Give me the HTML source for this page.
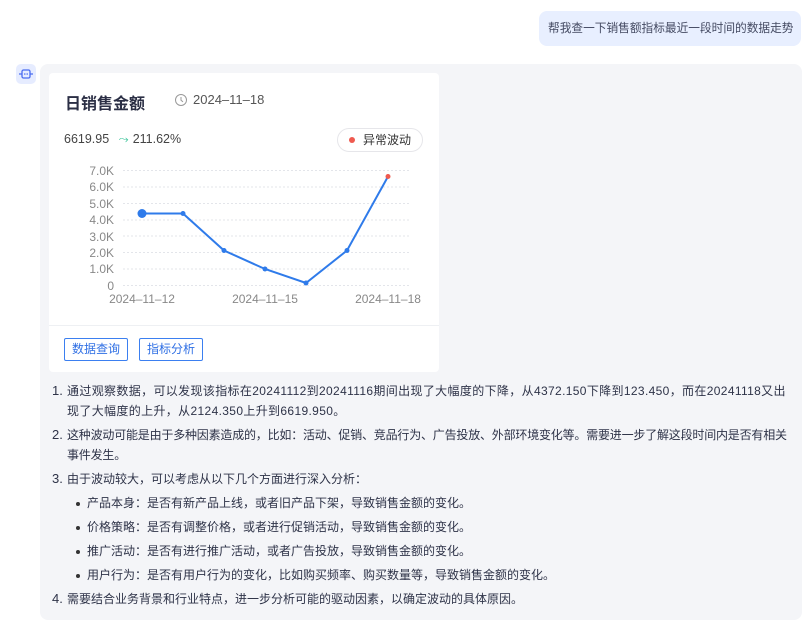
<!DOCTYPE html>
<html><head><meta charset="utf-8"><style>
*{margin:0;padding:0;box-sizing:border-box}
body{width:812px;height:626px;background:#fff;font-family:"Liberation Sans","Noto Sans CJK SC",sans-serif;color:#3a3f55;position:relative;overflow:hidden}
.user{position:absolute;left:539px;top:11px;width:262px;height:35px;background:#e8efff;border-radius:8px;font-size:11.7px;line-height:35px;padding-left:9px;color:#444a62;white-space:nowrap;overflow:hidden}
.av{position:absolute;left:16px;top:64px;width:20px;height:20px;background:#e6ecff;border-radius:5px}
.bot{position:absolute;left:40px;top:64px;width:762px;height:556px;background:#f4f5f8;border-radius:8px}
.card{position:absolute;left:49px;top:73px;width:390px;height:299px;background:#fff;border-radius:4px}
.title{position:absolute;left:16px;top:17px;font-size:16px;font-weight:bold;color:#2b2f45}
.date{position:absolute;left:144px;top:19px;font-size:13px;color:#555}
.val{position:absolute;left:15px;top:59px;font-size:12.5px;color:#444}
.tag{position:absolute;left:288px;top:55px;width:86px;height:24px;border:1px solid #e6e6ea;border-radius:12px;font-size:12px;line-height:22px;padding-left:25px;color:#333}
.tag:before{content:"";position:absolute;left:11px;top:8px;width:6px;height:6px;border-radius:50%;background:#ef5a4f}
.div{position:absolute;left:0;top:252px;width:390px;height:1px;background:#eef0f3}
.btn{position:absolute;top:265px;height:23px;border:1px solid #3b7ff0;border-radius:2px;color:#2f6fe4;font-size:12px;line-height:21px;padding:0 7px}
ol{position:absolute;left:52px;top:381px;width:745px;font-size:12px;line-height:20px;color:#2e3348;list-style:none;white-space:nowrap}
ol li{position:relative;padding-left:15px;margin-bottom:4px}
ol li .n{position:absolute;left:0;top:0;font-size:13px;letter-spacing:0}
ul{list-style:none;margin-top:4px}
ul li{position:relative;padding-left:20px;margin-bottom:4px}
ul li:before{content:"";position:absolute;left:9px;top:9px;width:4px;height:4px;border-radius:50%;background:#333}
</style></head><body>
<div class="user">帮我查一下销售额指标最近一段时间的数据走势</div>
<div class="av"><svg width="20" height="20" viewBox="0 0 20 20"><rect x="6" y="6" width="8" height="8" rx="1.5" fill="none" stroke="#4a6cf0" stroke-width="1.3"/><circle cx="8.8" cy="10" r=".8" fill="#4a6cf0"/><circle cx="11.2" cy="10" r=".8" fill="#4a6cf0"/><path d="M3 10h3M14 10h3" stroke="#4a6cf0" stroke-width="1.2"/></svg></div>
<div class="bot"></div>
<div class="card">
<div class="title">日销售金额</div>
<svg style="position:absolute;left:125px;top:20px" width="14" height="14"><circle cx="7" cy="7" r="5.5" fill="none" stroke="#999" stroke-width="1"/><path d="M7 4v3.3l2 1.5" fill="none" stroke="#999"/></svg>
<div class="date">2024–11–18</div>
<div class="val">6619.95 <span style="color:#3cc49a;margin:0 4px 0 6px">⤳</span>211.62%</div>
<div class="tag">异常波动</div>
<div class="div"></div>
<div class="btn" style="left:15px">数据查询</div>
<div class="btn" style="left:90px">指标分析</div>
</div>
<svg style="position:absolute;left:0;top:0" width="812" height="626">
<g stroke="#e3e5ea" stroke-dasharray="2,2" stroke-width="1">
<line x1="123" y1="170.5" x2="410" y2="170.5"/><line x1="123" y1="187" x2="410" y2="187"/><line x1="123" y1="203.5" x2="410" y2="203.5"/><line x1="123" y1="220" x2="410" y2="220"/><line x1="123" y1="236" x2="410" y2="236"/><line x1="123" y1="252.5" x2="410" y2="252.5"/><line x1="123" y1="269" x2="410" y2="269"/><line x1="123" y1="285.5" x2="410" y2="285.5"/></g>
<g font-size="12" fill="#888" text-anchor="end" font-family="Liberation Sans">
<text x="114" y="175">7.0K</text><text x="114" y="191">6.0K</text><text x="114" y="208">5.0K</text><text x="114" y="224">4.0K</text><text x="114" y="241">3.0K</text><text x="114" y="257">2.0K</text><text x="114" y="273">1.0K</text><text x="114" y="290">0</text></g>
<g font-size="12" fill="#888" text-anchor="middle" font-family="Liberation Sans"><text x="142" y="303">2024–11–12</text><text x="265" y="303">2024–11–15</text><text x="388" y="303">2024–11–18</text></g>
<polyline points="142,213.5 183,213.5 224,250.5 265,269 306,283 347,250.5 388,176.5" fill="none" stroke="#2f7bea" stroke-width="2"/>
<g fill="#2f7bea"><circle cx="142" cy="213.5" r="4.5"/><circle cx="183" cy="213.5" r="2.5"/><circle cx="224" cy="250.5" r="2.5"/><circle cx="265" cy="269" r="2.5"/><circle cx="306" cy="283" r="2.5"/><circle cx="347" cy="250.5" r="2.5"/></g>
<circle cx="388" cy="176.5" r="2.5" fill="#ef5a4f"/>
</svg>
<ol>
<li style="letter-spacing:0.35px"><span class="n">1.</span>通过观察数据，可以发现该指标在20241112到20241116期间出现了大幅度的下降，从4372.150下降到123.450，而在20241118又出<br>现了大幅度的上升，从2124.350上升到6619.950。</li>
<li style="letter-spacing:-0.2px"><span class="n">2.</span>这种波动可能是由于多种因素造成的，比如：活动、促销、竞品行为、广告投放、外部环境变化等。需要进一步了解这段时间内是否有相关<br>事件发生。</li>
<li><span class="n">3.</span>由于波动较大，可以考虑从以下几个方面进行深入分析：
<ul><li>产品本身：是否有新产品上线，或者旧产品下架，导致销售金额的变化。</li><li>价格策略：是否有调整价格，或者进行促销活动，导致销售金额的变化。</li><li>推广活动：是否有进行推广活动，或者广告投放，导致销售金额的变化。</li><li>用户行为：是否有用户行为的变化，比如购买频率、购买数量等，导致销售金额的变化。</li></ul></li>
<li><span class="n">4.</span>需要结合业务背景和行业特点，进一步分析可能的驱动因素，以确定波动的具体原因。</li>
</ol>
</body></html>
